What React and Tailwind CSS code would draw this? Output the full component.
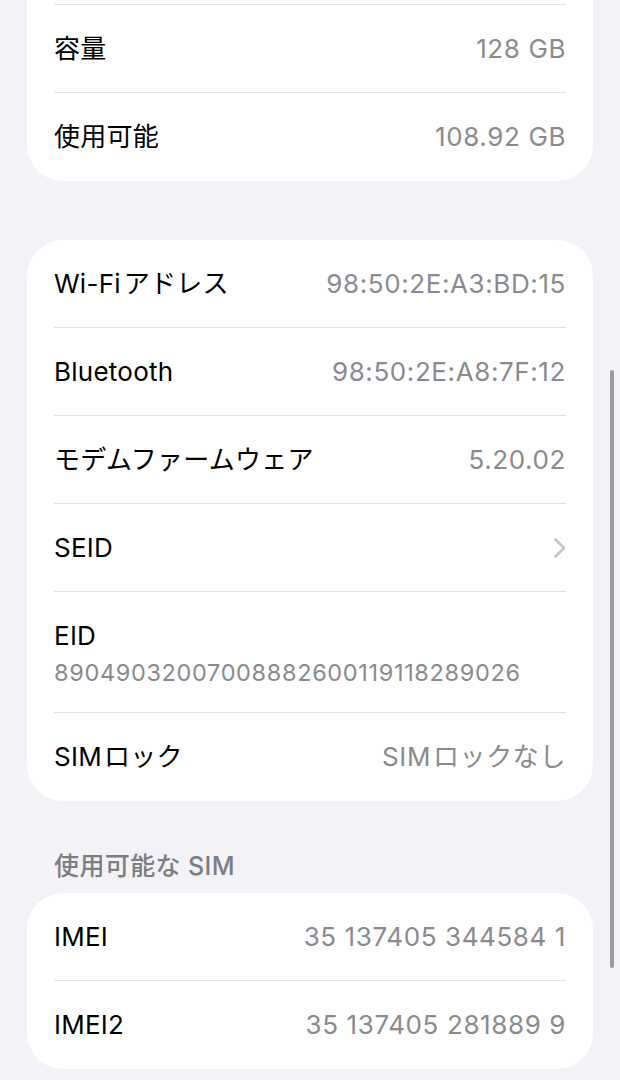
import React from "react";

const font = { fontFamily: '"Inter", "Noto Sans CJK JP", sans-serif' };

function Divider() {
  return <div className="absolute left-[27px] right-[27px] bottom-0 h-px bg-[#e2e2e6]" />;
}

function Row({ label, value, chevron, last }) {
  return (
    <div className="relative h-[88px] flex items-center justify-between px-[27px]">
      <span className="text-[26px] leading-[32px] text-black tracking-[0.25px]">{label}</span>
      {value && (
        <span className="text-[26px] leading-[32px] text-[#8a8a8e] tracking-[0.6px]">{value}</span>
      )}
      {chevron && (
        <svg width="14" height="22" viewBox="0 0 14 22" className="mr-[-1px]">
          <path d="M2.5 2.5 L11 11 L2.5 19.5" fill="none" stroke="#c4c4c8" strokeWidth="2.5" strokeLinecap="round" strokeLinejoin="round" />
        </svg>
      )}
      {!last && <Divider />}
    </div>
  );
}

function Card({ children, className = "" }) {
  return <div className={`bg-white rounded-[36px] overflow-hidden ${className}`}>{children}</div>;
}

export default function App() {
  return (
    <div className="relative w-[620px] h-[1080px] overflow-hidden bg-[#f2f2f7]" style={font}>
      <div className="flex flex-col px-[27px] mt-[-83px]">
        <Card>
          <Row label="" value="" />
          <Row label="容量" value="128 GB" />
          <Row label="使用可能" value="108.92 GB" last />
        </Card>

        <Card className="mt-[59px]">
          <Row label={<>Wi-Fi<span className="ml-[3px]">アドレス</span></>} value="98:50:2E:A3:BD:15" />
          <Row label="Bluetooth" value="98:50:2E:A8:7F:12" />
          <Row label="モデムファームウェア" value="5.20.02" />
          <Row label="SEID" chevron />
          <div className="relative h-[121px] flex flex-col px-[27px] pt-[28px]">
            <span className="text-[26px] leading-[32px] text-black tracking-[0.25px]">EID</span>
            <span className="mt-[5px] text-[23.5px] leading-[32px] text-[#8a8a8e] tracking-[0.65px]">
              89049032007008882600119118289026
            </span>
            <Divider />
          </div>
          <Row
            label={<>SIM<span className="ml-[2px]">ロック</span></>}
            value={<>SIM<span className="ml-[2px]">ロックなし</span></>}
            last
          />
        </Card>

        <div className="h-[92px] flex items-end px-[27px] pb-[12px]">
          <span className="text-[25px] leading-[30px] font-medium text-[#7d7d82] tracking-[0.4px]">使用可能な SIM</span>
        </div>

        <Card>
          <Row label="IMEI" value="35 137405 344584 1" />
          <Row label="IMEI2" value="35 137405 281889 9" last />
        </Card>
      </div>

      <div className="absolute left-[610px] top-[370px] w-[4px] h-[598px] rounded-full bg-[#9c9ca0]" />
    </div>
  );
}
